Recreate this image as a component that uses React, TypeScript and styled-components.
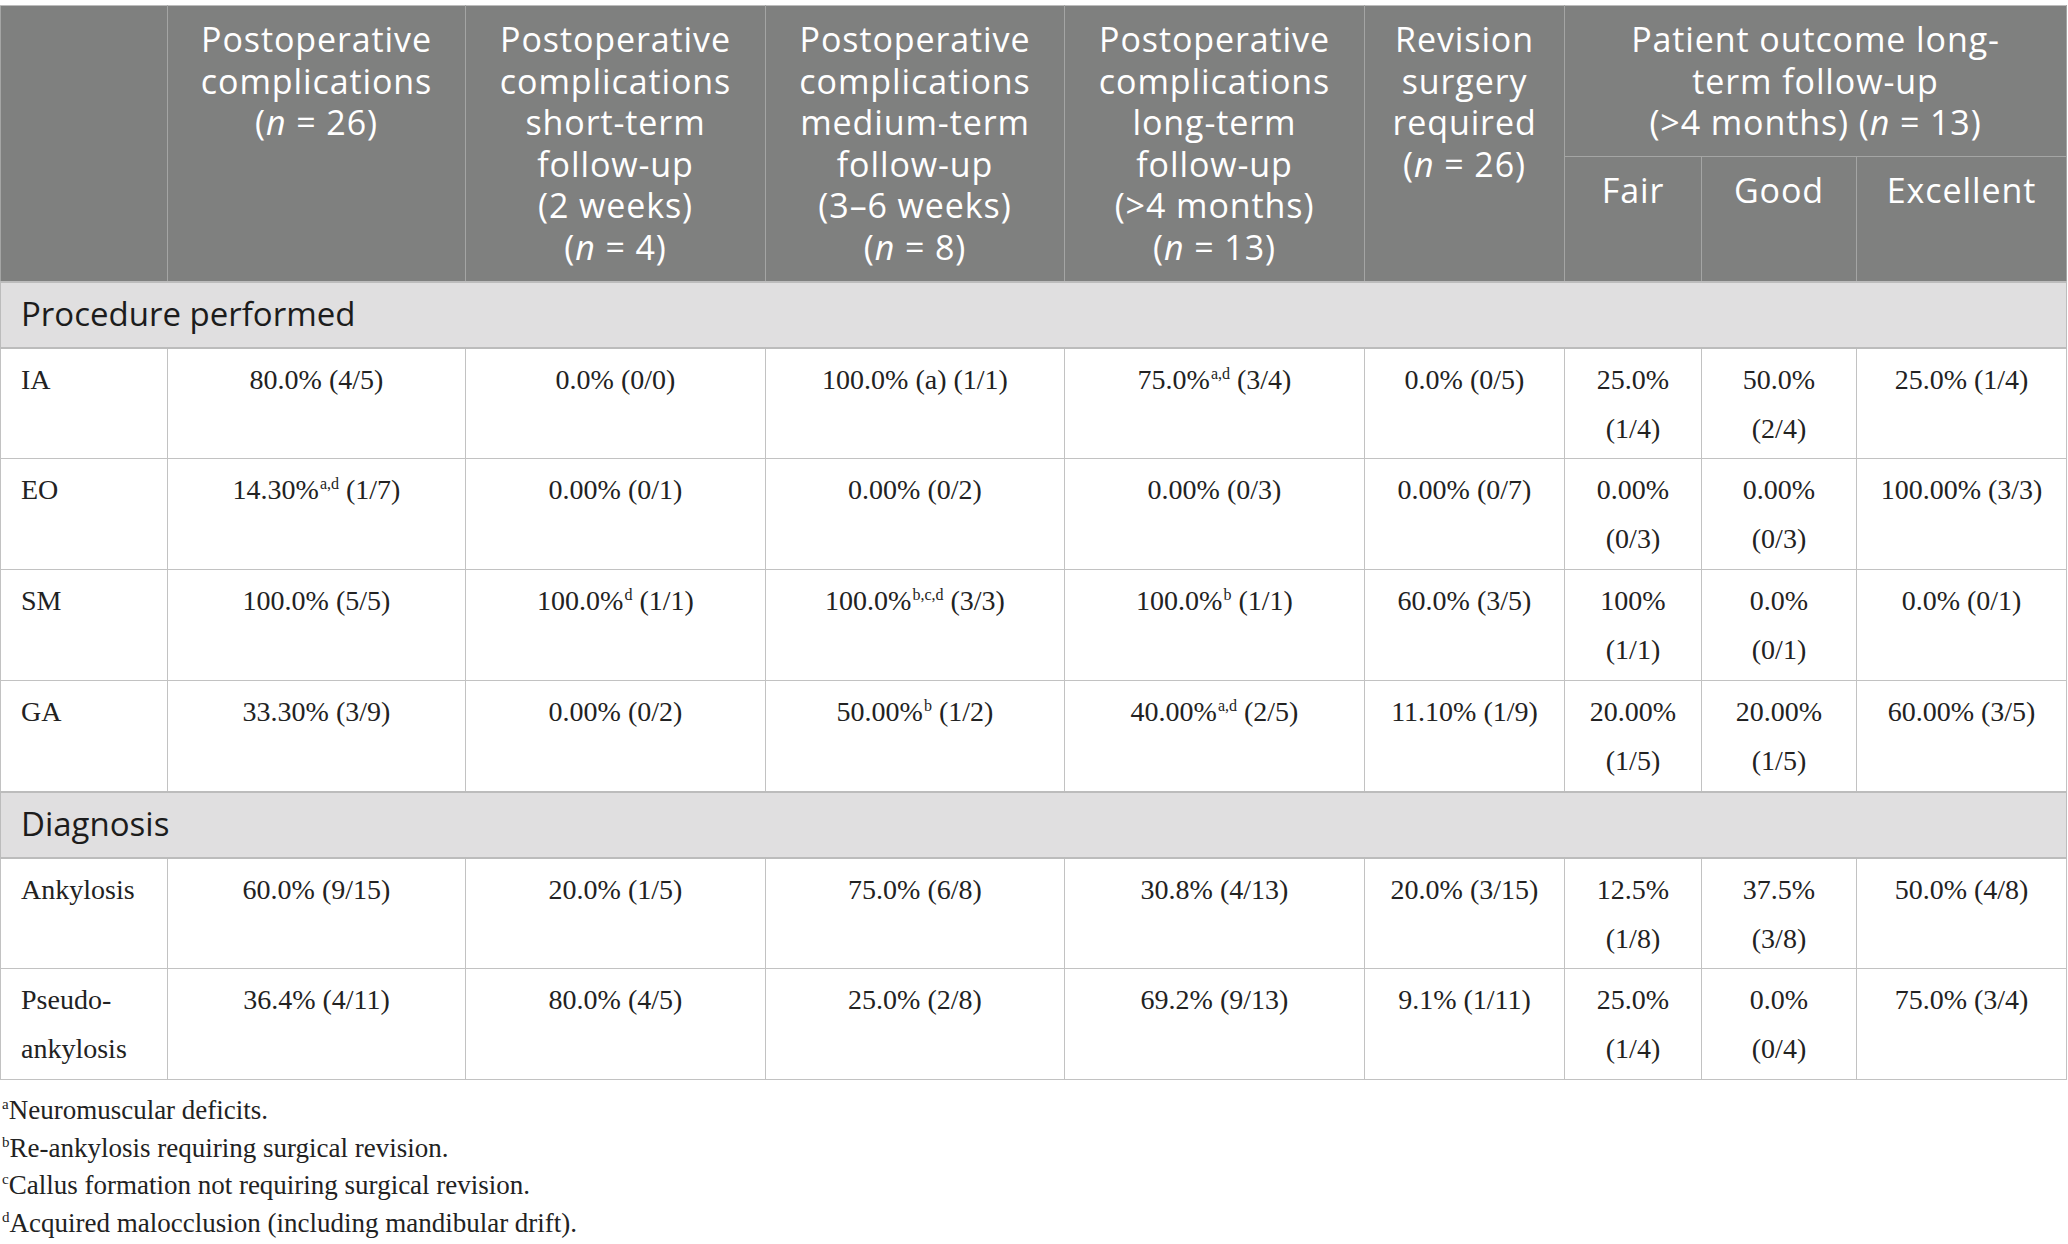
import styled, { createGlobalStyle } from 'styled-components';

const GlobalStyle = createGlobalStyle`
  body {
    margin: 0;
    background: #fff;
  }
`;

const Page = styled.div`
  padding-top: 5px;
  width: 2068px;
`;

const Table = styled.table`
  border-collapse: collapse;
  table-layout: fixed;
  width: 2067px;
  border: 1px solid #bcbcbc;
`;

const HeadRow = styled.tr<{ $h: number }>`
  height: ${(p) => p.$h}px;
`;

const HeadCell = styled.th`
  background: #7f807f;
  color: #fff;
  font-family: "Open Sans", "Noto Sans", sans-serif;
  font-weight: 400;
  font-size: 34px;
  letter-spacing: 0.9px;
  line-height: 41.5px;
  text-align: center;
  vertical-align: top;
  padding: 13px 4px 10px;
  border: 1px solid #a4a5a4;
  border-top-color: #bcbcbc;
`;

const GroupRow = styled.tr`
  height: 66px;
`;

const GroupCell = styled.td`
  background: #e0dfe0;
  color: #1c1c1c;
  font-family: "Open Sans", "Noto Sans", sans-serif;
  font-size: 33px;
  line-height: 40px;
  padding: 11px 20px 13px;
  border: 1px solid #bcbcbc;
  border-width: 2px 1px;
`;

const DataRow = styled.tr`
  height: 111px;
`;

const Cell = styled.td<{ $left?: boolean }>`
  font-family: "Liberation Serif", "Times New Roman", serif;
  font-size: 28px;
  line-height: 49px;
  color: #222;
  text-align: ${(p) => (p.$left ? 'left' : 'center')};
  vertical-align: top;
  padding: 6px 20px 5px;
  border: 1px solid #c2c2c2;
`;

const Sup = styled.sup`
  font-size: 16px;
  line-height: 0;
  vertical-align: 10px;
  margin-left: 1px;
`;

const Notes = styled.div`
  margin-top: 12px;
  font-family: "Liberation Serif", "Times New Roman", serif;
  font-size: 27px;
  line-height: 37.5px;
  color: #222;
`;

const Note = styled.div`
  padding-left: 2px;
`;

const NoteMark = styled.sup`
  font-size: 15px;
  line-height: 0;
  vertical-align: 10px;
`;

// "75.0%^a,d (3/4)" -> value, superscript, rest
const renderValue = (text: string) => {
  const i = text.indexOf('^');
  if (i < 0) return text;
  const j = text.indexOf(' ', i);
  return (
    <>
      {text.slice(0, i)}
      <Sup>{text.slice(i + 1, j)}</Sup>
      {text.slice(j)}
    </>
  );
};

const widths = [167, 298, 300, 299, 300, 200, 137, 155, 210];

const groups = [
  {
    title: 'Procedure performed',
    rows: [
      ['IA', '80.0% (4/5)', '0.0% (0/0)', '100.0% (a) (1/1)', '75.0%^a,d (3/4)', '0.0% (0/5)', '25.0% (1/4)', '50.0% (2/4)', '25.0% (1/4)'],
      ['EO', '14.30%^a,d (1/7)', '0.00% (0/1)', '0.00% (0/2)', '0.00% (0/3)', '0.00% (0/7)', '0.00% (0/3)', '0.00% (0/3)', '100.00% (3/3)'],
      ['SM', '100.0% (5/5)', '100.0%^d (1/1)', '100.0%^b,c,d (3/3)', '100.0%^b (1/1)', '60.0% (3/5)', '100% (1/1)', '0.0% (0/1)', '0.0% (0/1)'],
      ['GA', '33.30% (3/9)', '0.00% (0/2)', '50.00%^b (1/2)', '40.00%^a,d (2/5)', '11.10% (1/9)', '20.00% (1/5)', '20.00% (1/5)', '60.00% (3/5)'],
    ],
  },
  {
    title: 'Diagnosis',
    rows: [
      ['Ankylosis', '60.0% (9/15)', '20.0% (1/5)', '75.0% (6/8)', '30.8% (4/13)', '20.0% (3/15)', '12.5% (1/8)', '37.5% (3/8)', '50.0% (4/8)'],
      ['Pseudo-ankylosis', '36.4% (4/11)', '80.0% (4/5)', '25.0% (2/8)', '69.2% (9/13)', '9.1% (1/11)', '25.0% (1/4)', '0.0% (0/4)', '75.0% (3/4)'],
    ],
  },
];

const notes = [
  ['a', 'Neuromuscular deficits.'],
  ['b', 'Re-ankylosis requiring surgical revision.'],
  ['c', 'Callus formation not requiring surgical revision.'],
  ['d', 'Acquired malocclusion (including mandibular drift).'],
];

const App = () => {
  return (
    <Page>
      <GlobalStyle />
      <Table>
        <colgroup>
          {widths.map((w, i) => (
            <col key={i} style={{ width: w }} />
          ))}
        </colgroup>
        <thead>
          <HeadRow $h={151}>
            <HeadCell rowSpan={2} />
            <HeadCell rowSpan={2}>
              Postoperative<br />complications<br />(<i>n</i> = 26)
            </HeadCell>
            <HeadCell rowSpan={2}>
              Postoperative<br />complications<br />short-term<br />follow-up<br />(2 weeks)<br />(<i>n</i> = 4)
            </HeadCell>
            <HeadCell rowSpan={2}>
              Postoperative<br />complications<br />medium-term<br />follow-up<br />(3–6 weeks)<br />(<i>n</i> = 8)
            </HeadCell>
            <HeadCell rowSpan={2}>
              Postoperative<br />complications<br />long-term<br />follow-up<br />(&gt;4 months)<br />(<i>n</i> = 13)
            </HeadCell>
            <HeadCell rowSpan={2}>
              Revision<br />surgery<br />required<br />(<i>n</i> = 26)
            </HeadCell>
            <HeadCell colSpan={3}>
              Patient outcome long-<br />term follow-up<br />(&gt;4 months) (<i>n</i> = 13)
            </HeadCell>
          </HeadRow>
          <HeadRow $h={125}>
            <HeadCell>Fair</HeadCell>
            <HeadCell>Good</HeadCell>
            <HeadCell>Excellent</HeadCell>
          </HeadRow>
        </thead>
        <tbody>
          {groups.map((g) => (
            <>
              <GroupRow key={g.title}>
                <GroupCell colSpan={9}>{g.title}</GroupCell>
              </GroupRow>
              {g.rows.map((r) => (
                <DataRow key={r[0]}>
                  {r.map((c, i) => (
                    <Cell key={i} $left={i === 0}>
                      {i === 0 ? c : renderValue(c)}
                    </Cell>
                  ))}
                </DataRow>
              ))}
            </>
          ))}
        </tbody>
      </Table>
      <Notes>
        {notes.map(([m, t]) => (
          <Note key={m}>
            <NoteMark>{m}</NoteMark>
            {t}
          </Note>
        ))}
      </Notes>
    </Page>
  );
};

export default App;
